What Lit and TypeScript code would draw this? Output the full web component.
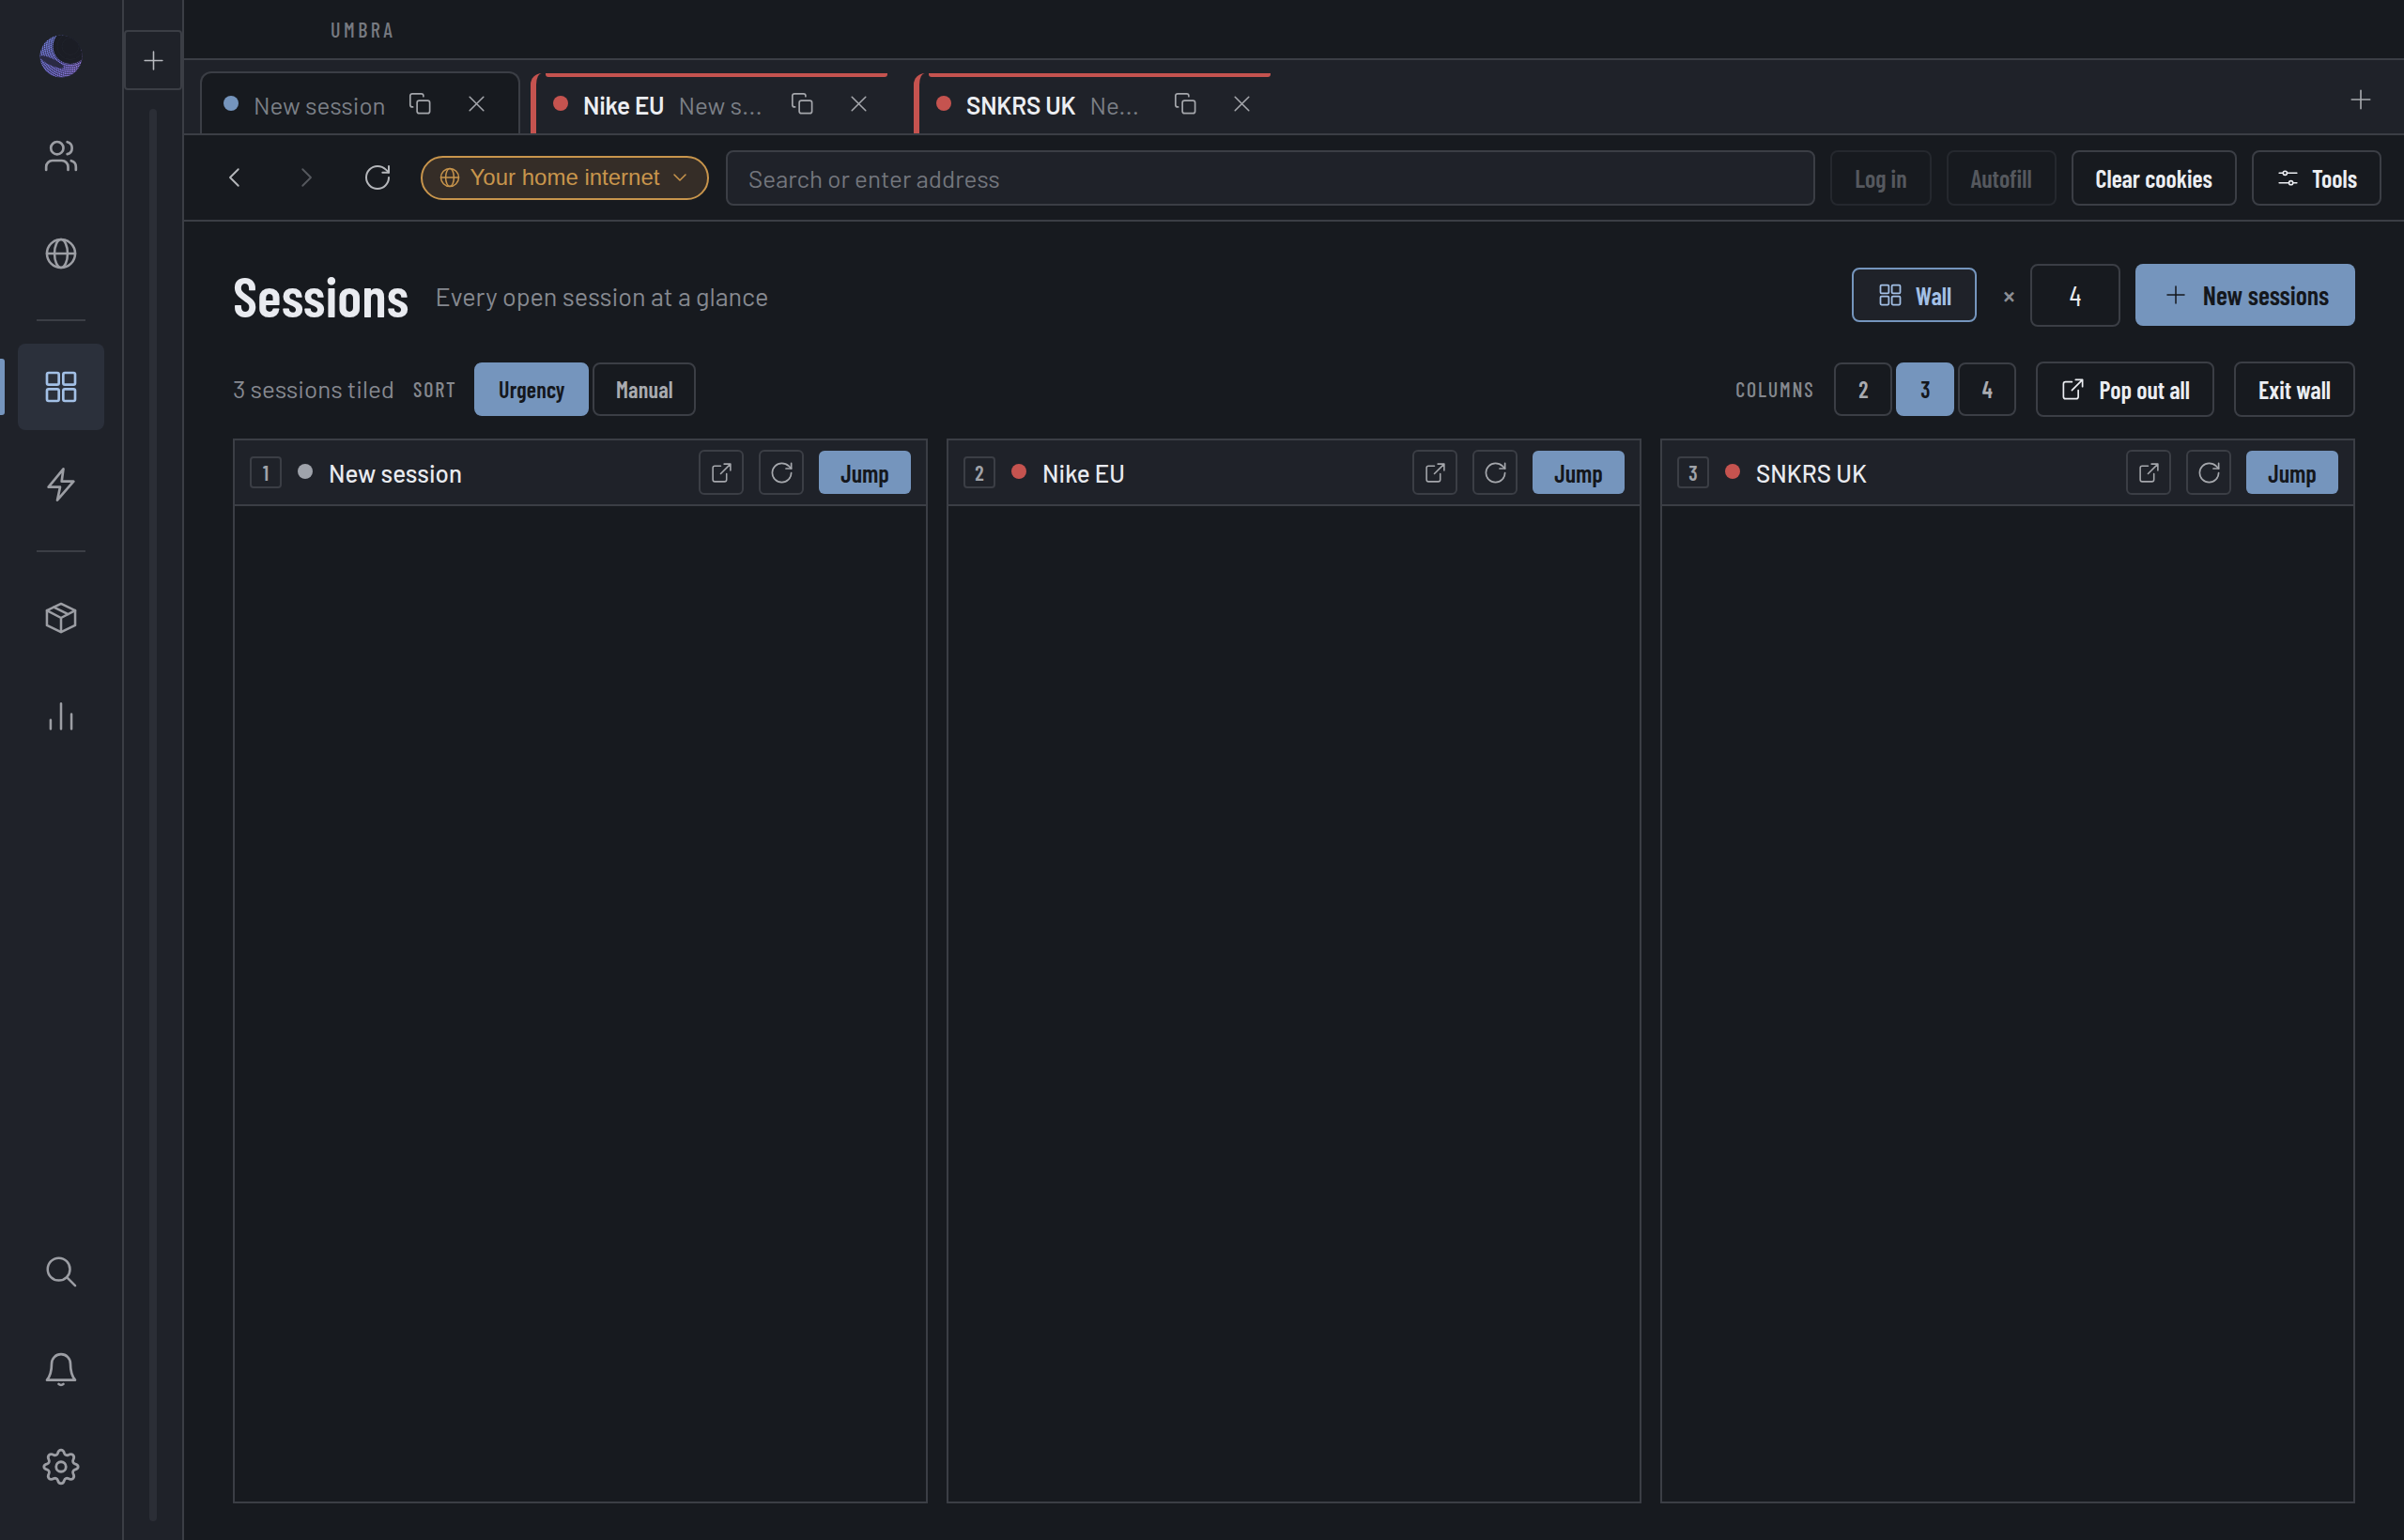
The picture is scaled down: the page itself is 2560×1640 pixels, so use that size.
import { LitElement, css, html, svg } from 'lit';
import { customElement } from 'lit/decorators.js';

// stroke icons on a 24 grid
const ICONS = {
  users: svg`<circle cx="9.500" cy="7" r="4"/><path d="M16 3.130a4 4 0 0 1 0 7.750"/><path d="M2.500 21v-2a4 4 0 0 1 4-4h6a4 4 0 0 1 4 4v2"/><path d="M21.500 21v-2a4 4 0 0 0-3-3.870"/>`,
  globe: svg`<circle cx="12" cy="12" r="9.500"/><ellipse cx="12" cy="12" rx="4.400" ry="9.500"/><path d="M2.500 12h19"/>`,
  grid: svg`<rect x="3" y="3" width="7.600" height="7.600" rx="1"/><rect x="13.400" y="3" width="7.600" height="7.600" rx="1"/><rect x="3" y="13.400" width="7.600" height="7.600" rx="1"/><rect x="13.400" y="13.400" width="7.600" height="7.600" rx="1"/>`,
  bolt: svg`<path d="M13.500 2 4 13.600h7.400L9.600 22 20 10h-7.600z"/>`,
  box: svg`<path d="M12 2.500 21.500 7v10L12 21.500 2.500 17V7z"/><path d="M2.500 7 12 12l9.500-5M12 12v9.500M7.200 4.800l9.600 4.800"/>`,
  chart: svg`<path d="M5 21v-6M12 21V4M19 21V11"/>`,
  search: svg`<circle cx="10.500" cy="10.500" r="7.500"/><path d="m16 16 5.500 5.500"/>`,
  bell: svg`<path d="M6 8.500a6 6 0 0 1 12 0c0 5.500 1 8 3 10.500H3c2-2.500 3-5 3-10.500z"/><path d="M10.500 21.500c.8.8 2.200.8 3 0"/>`,
  gear: svg`<circle cx="12" cy="12" r="3"/><path d="M12 1.800c1.200 0 1.700.8 2 2 .3 1 1.400 1.500 2.400 1 1.100-.6 2-.8 2.900.1s.7 1.800.1 2.900c-.5 1 0 2.100 1 2.400 1.200.3 2 .8 2 1.800s-.8 1.500-2 1.800c-1 .3-1.500 1.400-1 2.400.6 1.100.8 2-.1 2.900s-1.800.7-2.900.1c-1-.5-2.100 0-2.400 1-.3 1.200-.8 2-2 2s-1.700-.8-2-2c-.3-1-1.400-1.500-2.400-1-1.100.6-2 .8-2.900-.1s-.7-1.800-.1-2.900c.5-1 0-2.100-1-2.400-1.200-.3-2-.8-2-1.800s.8-1.500 2-1.800c1-.3 1.500-1.400 1-2.400-.6-1.100-.8-2 .1-2.900s1.800-.7 2.900-.1c1 .5 2.100 0 2.400-1 .3-1.200.8-2 2-2z"/>`,
  plus: svg`<path d="M12 3v18M3 12h18"/>`,
  close: svg`<path d="m5 5 14 14M19 5 5 19"/>`,
  copy: svg`<rect x="9" y="9" width="12" height="12" rx="2"/><path d="M5 15H4.500a2 2 0 0 1-2-2V4.500a2 2 0 0 1 2-2H13a2 2 0 0 1 2 2V5"/>`,
  left: svg`<path d="m15 5-7 7 7 7"/>`,
  right: svg`<path d="m9 5 7 7-7 7"/>`,
  reload: svg`<path d="M21 12a9 9 0 1 1-9-9c2.520 0 4.930 1 6.740 2.740L21 8"/><path d="M21 3v5h-5"/>`,
  down: svg`<path d="m6 9 6 6 6-6"/>`,
  sliders: svg`<path d="M3 7h4M11 7h10M3 17h10M17 17h4"/><circle cx="9" cy="7" r="2"/><circle cx="15" cy="17" r="2"/>`,
  popout: svg`<path d="M11 5H5a2 2 0 0 0-2 2v12a2 2 0 0 0 2 2h10a2 2 0 0 0 2-2v-6"/><path d="M11 13 21 3M14.500 3H21v6.500"/>`,
};

type IconName = keyof typeof ICONS;

const icon = (name: IconName, size: number, sw = 1.5) => html`<svg
  class="icon"
  width=${size}
  height=${size}
  viewBox="0 0 24 24"
  fill="none"
  stroke="currentColor"
  stroke-width=${sw}
  stroke-linecap="round"
  stroke-linejoin="round"
>${ICONS[name]}</svg>`;

const TABS = [
  { name: '', sub: 'New session', dot: 'blue', active: true },
  { name: 'Nike EU', sub: 'New s...', dot: 'red', active: false },
  { name: 'SNKRS UK', sub: 'Ne...', dot: 'red', active: false },
];

const CARDS = [
  { n: 1, name: 'New session', dot: 'grey' },
  { n: 2, name: 'Nike EU', dot: 'red' },
  { n: 3, name: 'SNKRS UK', dot: 'red' },
];

// concentric rings that give the moon its dithered print look
const RINGS = Array.from({ length: 14 }, (_, i) => 12 + i * 2.2);

@customElement('app-root')
export class AppRoot extends LitElement {
  render() {
    return html`
      <nav class="rail">
        <div class="logo">
          <svg width="46" height="46" viewBox="0 0 46 46">
            <defs>
              <linearGradient id="moon" x1="0" y1="0" x2="1" y2="1">
                <stop offset="0" stop-color="#7c93f2"/>
                <stop offset="0.6" stop-color="#8378e6"/>
                <stop offset="1" stop-color="#b183e8"/>
              </linearGradient>
              <clipPath id="disc"><circle cx="23" cy="23" r="22.500"/></clipPath>
            </defs>
            <g clip-path="url(#disc)">
              <rect width="46" height="46" fill="#2c2e4c"/>
              <g fill="none" stroke="url(#moon)" stroke-width="1.500" stroke-dasharray="1.400 .5">
                ${RINGS.map((r) => svg`<circle cx="33" cy="12" r=${r}/>`)}
              </g>
              <ellipse cx="13" cy="29" rx="14" ry="3.500" transform="rotate(25 13 29)" fill="#2a2a44"/>
              <circle cx="33" cy="12.500" r="18.500" fill="#1b1d25"/>
              <g fill="none" stroke="#24262f" stroke-width=".6">
                <circle cx="33" cy="12.500" r="14"/>
                <circle cx="33" cy="12.500" r="9"/>
              </g>
            </g>
          </svg>
        </div>
        ${this.railItem('users', 40)}
        ${this.railItem('globe', 38)}
        <div class="rule"></div>
        ${this.railItem('grid', 40, true)}
        ${this.railItem('bolt', 40)}
        <div class="rule"></div>
        ${this.railItem('box', 38)}
        ${this.railItem('chart', 38)}
        <div class="spacer"></div>
        ${this.railItem('search', 38)}
        ${this.railItem('bell', 40)}
        ${this.railItem('gear', 42)}
      </nav>

      <aside class="strip">
        <button class="strip-add">${icon('plus', 25)}</button>
        <div class="strip-track"></div>
      </aside>

      <div class="main">
        <header class="title-bar"><span class="brand">UMBRA</span></header>

        <div class="tab-bar">
          ${TABS.map(
            (t, i) => html`
              <div class="tab tab-${i} ${t.active ? 'active' : 'flagged'}">
                <span class="dot ${t.dot}"></span>
                ${t.name ? html`<span class="tab-name">${t.name}</span>` : ''}
                <span class="tab-sub">${t.sub}</span>
                <span class="tab-icons">${icon('copy', 27)}${icon('close', 25)}</span>
              </div>
            `,
          )}
          <span class="tab-plus">${icon('plus', 26)}</span>
        </div>

        <div class="toolbar">
          <span class="nav-btn">${icon('left', 30)}</span>
          <span class="nav-btn faded">${icon('right', 30)}</span>
          <span class="nav-btn">${icon('reload', 32)}</span>
          <span class="pill">${icon('globe', 24)}<span>Your home internet</span>${icon('down', 24)}</span>
          <div class="address">Search or enter address</div>
          <button class="btn off">Log in</button>
          <button class="btn off">Autofill</button>
          <button class="btn">Clear cookies</button>
          <button class="btn tools">${icon('sliders', 25)}Tools</button>
        </div>

        <section class="page">
          <div class="head">
            <h1>Sessions</h1>
            <span class="sub">Every open session at a glance</span>
            <div class="grow"></div>
            <button class="wall">${icon('grid', 28)}Wall</button>
            <span class="times">×</span>
            <div class="count">4</div>
            <button class="primary">${icon('plus', 24)}New sessions</button>
          </div>

          <div class="controls">
            <span class="tiled">3 sessions tiled</span>
            <span class="label sort-label">SORT</span>
            <div class="seg sort">
              <button class="seg-btn on">Urgency</button>
              <button class="seg-btn">Manual</button>
            </div>
            <div class="grow"></div>
            <span class="label">COLUMNS</span>
            <div class="seg cols">
              <button class="seg-btn">2</button>
              <button class="seg-btn on">3</button>
              <button class="seg-btn">4</button>
            </div>
            <button class="btn">${icon('popout', 27)}Pop out all</button>
            <button class="btn">Exit wall</button>
          </div>

          <div class="wall-grid">
            ${CARDS.map(
              (c) => html`
                <article class="card">
                  <div class="card-head">
                    <span class="num">${c.n}</span>
                    <span class="dot ${c.dot}"></span>
                    <span class="card-name">${c.name}</span>
                    <div class="grow"></div>
                    <span class="square">${icon('popout', 25)}</span>
                    <span class="square">${icon('reload', 27)}</span>
                    <button class="jump">Jump</button>
                  </div>
                </article>
              `,
            )}
          </div>
        </section>
      </div>
    `;
  }

  private railItem(name: IconName, size: number, active = false) {
    return html`<div class="rail-item ${active ? 'active' : ''}">${icon(name, size, 1.6)}</div>`;
  }

  static styles = css`
    :host {
      --bg: #171a1f;
      --panel: #1f2229;
      --line: #3b3e45;
      --accent: #7595bd;
      --red: #c5534f;
      --amber: #c8954c;
      --narrow: 'Barlow Condensed', 'Roboto Condensed', sans-serif;
      --body: 'Barlow', 'Roboto', sans-serif;
      display: flex;
      width: 2560px;
      height: 1640px;
      background: var(--bg);
      color: #e9ebf0;
      font-family: var(--body);
      overflow: hidden;
    }

    .icon {
      display: block;
      flex: none;
    }

    button {
      font: inherit;
      color: inherit;
      background: none;
    }

    .grow {
      flex: 1;
    }

    .rail {
      flex: none;
      box-sizing: border-box;
      width: 132px;
      padding: 28px 0 32px;
      display: flex;
      flex-direction: column;
      align-items: center;
      gap: 12px;
      background: var(--panel);
      border-right: 2px solid var(--line);
    }

    .logo {
      height: 80px;
      padding-top: 9px;
      box-sizing: border-box;
    }

    .rail-item {
      position: relative;
      width: 92px;
      height: 92px;
      display: flex;
      align-items: center;
      justify-content: center;
      border-radius: 8px;
      color: #9c9ea4;
    }

    .rail-item.active {
      background: #2b303b;
      color: #a3c0e6;
    }

    .rail-item.active::before {
      content: '';
      position: absolute;
      left: -19px;
      top: 16px;
      width: 5px;
      height: 60px;
      background: var(--accent);
      border-radius: 0 3px 3px 0;
    }

    .rule {
      width: 52px;
      height: 2px;
      margin: 12px 0;
      background: var(--line);
    }

    .spacer {
      flex: 1;
    }

    .strip {
      flex: none;
      box-sizing: border-box;
      width: 64px;
      padding-top: 32px;
      display: flex;
      flex-direction: column;
      align-items: center;
      background: var(--panel);
      border-right: 2px solid var(--line);
    }

    .strip-add {
      box-sizing: border-box;
      width: 62px;
      height: 64px;
      padding: 0;
      display: flex;
      align-items: center;
      justify-content: center;
      border: 2px solid var(--line);
      border-radius: 4px;
      color: #b9bbc0;
    }

    .strip-track {
      width: 8px;
      height: 1504px;
      margin-top: 20px;
      border-radius: 4px;
      background: #2b2e36;
    }

    .main {
      flex: 1;
      min-width: 0;
      display: flex;
      flex-direction: column;
    }

    .title-bar {
      box-sizing: border-box;
      height: 64px;
      padding-left: 156px;
      display: flex;
      align-items: center;
      border-bottom: 2px solid var(--line);
    }

    .brand {
      font-family: var(--narrow);
      font-size: 22px;
      font-weight: 500;
      letter-spacing: 3.500px;
      color: #777a81;
    }

    .tab-bar {
      box-sizing: border-box;
      height: 80px;
      padding-left: 17px;
      display: flex;
      align-items: flex-end;
      gap: 11px;
      background: var(--panel);
      border-bottom: 2px solid var(--line);
    }

    .tab {
      box-sizing: border-box;
      display: flex;
      align-items: center;
      font-size: 26px;
      border-radius: 12px 12px 0 0;
    }

    .tab.active {
      width: 341px;
      height: 66px;
      padding: 0 32px 0 23px;
      background: var(--bg);
      border: 2px solid var(--line);
      border-bottom: none;
      color: #7c8087;
    }

    .tab.flagged {
      position: relative;
      width: 380px;
      height: 64px;
      padding: 0 18px 0 18px;
      border-left: 6px solid var(--red);
      border-radius: 12px 0 0 0;
    }

    .tab.flagged::before {
      content: '';
      position: absolute;
      left: 10px;
      right: 0;
      top: 0;
      height: 4px;
      background: var(--red);
      border-radius: 0 0 3px 3px;
    }

    .tab-2 {
      margin-left: 17px;
    }

    .tab .dot {
      margin-right: 16px;
    }

    .tab-name {
      margin: 2px 15px 0 0;
      font-weight: 600;
      letter-spacing: -0.2px;
      color: #eceef2;
      white-space: nowrap;
    }

    .tab-sub {
      margin-top: 2px;
      color: #7c8087;
      white-space: nowrap;
    }

    .tab-icons {
      margin-left: auto;
      display: flex;
      align-items: center;
      gap: 34px;
      color: #a5a7ac;
    }

    .tab-plus {
      margin: 0 33px 23px auto;
      color: #a8aaae;
    }

    .dot {
      flex: none;
      width: 16px;
      height: 16px;
      border-radius: 50%;
    }

    .dot.blue {
      background: var(--accent);
    }

    .dot.red {
      background: var(--red);
    }

    .dot.grey {
      background: #9fa3ab;
    }

    .toolbar {
      box-sizing: border-box;
      height: 92px;
      padding: 0 24px 0 16px;
      display: flex;
      align-items: center;
      gap: 16px;
      border-bottom: 2px solid var(--line);
    }

    .nav-btn {
      width: 76px;
      display: flex;
      justify-content: center;
      color: #b5b7bb;
    }

    .nav-btn.faded {
      color: #55585e;
    }

    .nav-btn + .nav-btn {
      margin-left: -16px;
    }

    .pill {
      box-sizing: border-box;
      width: 307px;
      height: 47px;
      display: flex;
      align-items: center;
      justify-content: center;
      gap: 10px;
      margin-left: -8px;
      border: 2px solid var(--amber);
      border-radius: 24px;
      background: #352d27;
      color: var(--amber);
      font-family: 'Liberation Sans', sans-serif;
      font-size: 24px;
      white-space: nowrap;
    }

    .address {
      flex: 1;
      box-sizing: border-box;
      height: 59px;
      margin-left: 2px;
      padding-left: 22px;
      display: flex;
      align-items: center;
      background: var(--panel);
      border: 2px solid var(--line);
      border-radius: 8px;
      color: #73767d;
      font-size: 26px;
    }

    .btn {
      box-sizing: border-box;
      height: 59px;
      padding: 0 24px;
      display: flex;
      align-items: center;
      gap: 14px;
      border: 2px solid var(--line);
      border-radius: 8px;
      font-family: var(--narrow);
      font-size: 26px;
      font-weight: 600;
      color: #eceef2;
      white-space: nowrap;
    }

    .btn.tools {
      gap: 13px;
    }

    .btn.off {
      border-color: #25282e;
      color: #55585e;
    }

    .page {
      flex: 1;
      min-height: 0;
      box-sizing: border-box;
      padding: 0 52px 39px;
      display: flex;
      flex-direction: column;
    }

    .head {
      height: 80px;
      margin: 38px 0 30px;
      display: flex;
      align-items: center;
    }

    h1 {
      margin: 0 28px 0 0;
      font-family: var(--narrow);
      font-size: 60px;
      font-weight: 600;
      line-height: 1;
    }

    .sub {
      margin-top: 1px;
      font-size: 27px;
      color: #868990;
    }

    .wall {
      box-sizing: border-box;
      width: 133px;
      height: 58px;
      padding: 0;
      display: flex;
      align-items: center;
      justify-content: center;
      gap: 13px;
      background: var(--panel);
      border: 2px solid var(--accent);
      border-radius: 8px;
      color: #a3c0e6;
      font-family: var(--narrow);
      font-size: 26px;
      font-weight: 600;
    }

    .times {
      box-sizing: border-box;
      width: 57px;
      padding-left: 12px;
      text-align: center;
      color: #8b8e94;
      font-size: 30px;
      font-weight: 500;
    }

    .count {
      box-sizing: border-box;
      width: 96px;
      height: 67px;
      display: flex;
      align-items: center;
      justify-content: center;
      border: 2px solid var(--line);
      border-radius: 8px;
      font-family: var(--narrow);
      font-size: 30px;
    }

    .primary {
      box-sizing: border-box;
      width: 234px;
      height: 66px;
      margin-left: 16px;
      padding: 0 0 0 3px;
      display: flex;
      align-items: center;
      justify-content: center;
      gap: 17px;
      border: none;
      border-radius: 8px;
      background: var(--accent);
      color: #14171c;
      font-family: var(--narrow);
      font-size: 28px;
      font-weight: 600;
    }

    .controls {
      height: 60px;
      display: flex;
      align-items: center;
      gap: 21px;
      margin-bottom: 23px;
    }

    .tiled {
      margin-top: -2px;
      font-size: 26px;
      color: #868990;
    }

    .label {
      font-family: var(--narrow);
      font-size: 22px;
      font-weight: 500;
      letter-spacing: 1.800px;
      color: #85888e;
    }

    .sort-label {
      margin-left: -1px;
    }

    .seg {
      display: flex;
      gap: 4px;
    }

    .seg.sort {
      margin-left: -2px;
    }

    .seg-btn {
      box-sizing: border-box;
      height: 57px;
      padding: 0;
      border: 2px solid var(--line);
      border-radius: 8px;
      font-family: var(--narrow);
      font-size: 24px;
      font-weight: 600;
      letter-spacing: 0.2px;
      color: #a9abb0;
    }

    .seg-btn.on {
      background: var(--accent);
      border-color: var(--accent);
      color: #14171c;
    }

    .sort .seg-btn:first-child {
      width: 122px;
    }

    .sort .seg-btn:last-child {
      width: 110px;
    }

    .cols .seg-btn {
      width: 62px;
    }

    .wall-grid {
      flex: 1;
      min-height: 0;
      display: grid;
      grid-template-columns: repeat(3, 1fr);
      gap: 20px;
    }

    .card {
      box-sizing: border-box;
      border: 2px solid var(--line);
    }

    .card-head {
      box-sizing: border-box;
      height: 70px;
      padding: 0 16px;
      display: flex;
      align-items: center;
      background: var(--panel);
      border-bottom: 2px solid var(--line);
    }

    .num {
      box-sizing: border-box;
      width: 34px;
      height: 34px;
      display: flex;
      align-items: center;
      justify-content: center;
      border: 2px solid var(--line);
      border-radius: 4px;
      font-family: var(--narrow);
      font-size: 22px;
      font-weight: 600;
      color: #a0a3a9;
    }

    .card-head .dot {
      margin: -2px 17px 0;
    }

    .card-name {
      font-size: 26px;
      font-weight: 500;
    }

    .square {
      box-sizing: border-box;
      width: 48px;
      height: 48px;
      margin-right: 16px;
      display: flex;
      align-items: center;
      justify-content: center;
      border: 2px solid var(--line);
      border-radius: 6px;
      color: #a5a7ac;
    }

    .jump {
      box-sizing: border-box;
      width: 98px;
      height: 46px;
      padding: 0;
      border: none;
      border-radius: 6px;
      background: var(--accent);
      color: #14171c;
      font-family: var(--narrow);
      font-size: 26px;
      font-weight: 600;
    }
  `;
}

declare global {
  interface HTMLElementTagNameMap {
    'app-root': AppRoot;
  }
}
